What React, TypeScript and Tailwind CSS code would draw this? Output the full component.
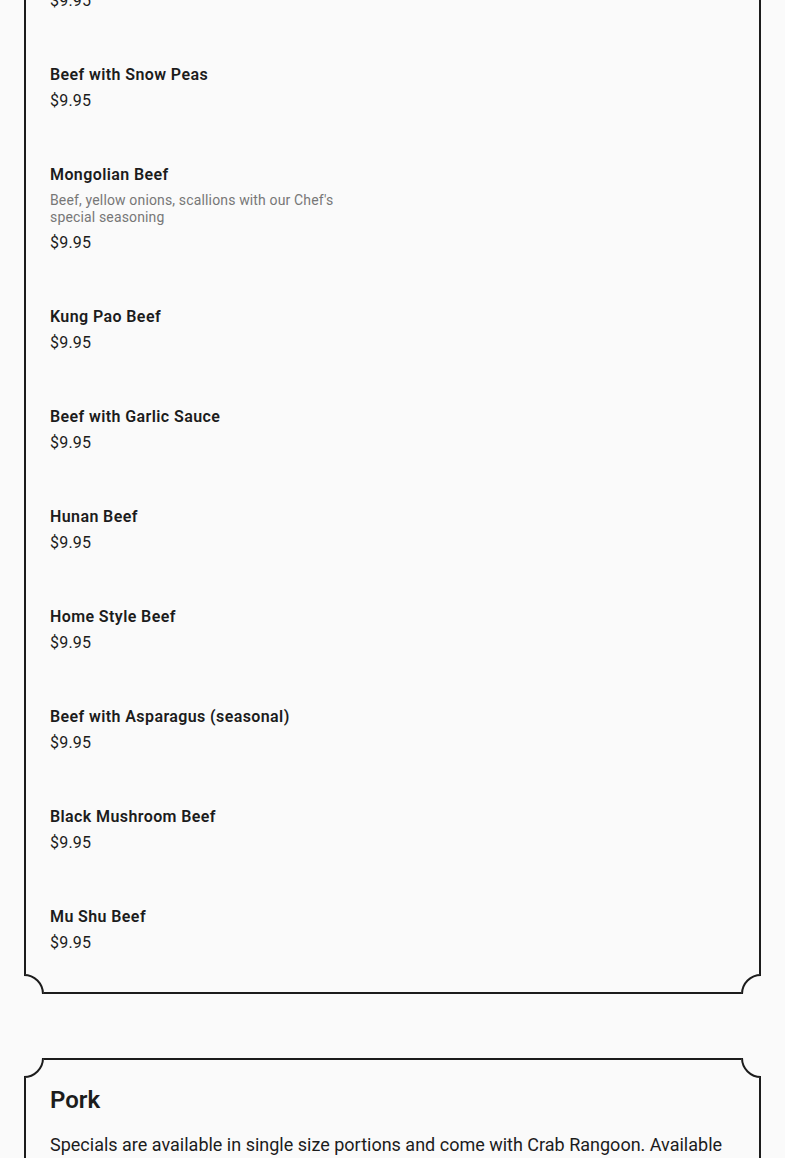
const beefItems = [
  { name: 'Beef with Snow Peas', price: '$9.95' },
  { name: 'Mongolian Beef', desc: "Beef, yellow onions, scallions with our Chef's special seasoning", price: '$9.95' },
  { name: 'Kung Pao Beef', price: '$9.95' },
  { name: 'Beef with Garlic Sauce', price: '$9.95' },
  { name: 'Hunan Beef', price: '$9.95' },
  { name: 'Home Style Beef', price: '$9.95' },
  { name: 'Beef with Asparagus (seasonal)', price: '$9.95' },
  { name: 'Black Mushroom Beef', price: '$9.95' },
  { name: 'Mu Shu Beef', price: '$9.95' },
]

// scooped corner: covers the card's border corner and draws a quarter arc
function Corner({ pos }: { pos: 'tl' | 'tr' | 'bl' | 'br' }) {
  const box = {
    tl: '-top-[2px] -left-[2px]',
    tr: '-top-[2px] -right-[2px]',
    bl: '-bottom-[2px] -left-[2px]',
    br: '-bottom-[2px] -right-[2px]',
  }[pos]
  const circle = {
    tl: '-top-[20px] -left-[20px]',
    tr: '-top-[20px] -right-[20px]',
    bl: '-bottom-[20px] -left-[20px]',
    br: '-bottom-[20px] -right-[20px]',
  }[pos]
  return (
    <div className={`absolute ${box} w-[20px] h-[20px] overflow-hidden bg-[#fafafa]`}>
      <div className={`absolute ${circle} w-[40px] h-[40px] rounded-full border-2 border-[#1c1c1c]`} />
    </div>
  )
}

function MenuItem({ name, desc, price }: { name: string; desc?: string; price: string }) {
  return (
    <div className="flex flex-col">
      <h4 className="text-base leading-6 font-semibold tracking-[0.4px] text-[#1c1c1c]">{name}</h4>
      {desc && (
        <p className="w-[300px] mt-[5px] text-sm leading-[17px] tracking-[0.15px] text-[#777777]">{desc}</p>
      )}
      <p className={`${desc ? 'mt-[5px]' : 'mt-[2px]'} text-base leading-6 tracking-[0.2px] text-[#1c1c1c]`}>{price}</p>
    </div>
  )
}

export default function App() {
  return (
    <div className="min-h-screen bg-[#fafafa] overflow-hidden" style={{ fontFamily: 'Roboto, "Liberation Sans", sans-serif' }}>
      <div className="mx-6 h-[1158px] overflow-hidden">
        <div className="relative border-x-2 border-b-2 border-[#1c1c1c] px-6 pb-[37px]">
          <div className="flex flex-col gap-[50px]">
            <p className="-mt-[11px] text-base leading-6 tracking-[0.2px] text-[#1c1c1c]">$9.95</p>
            {beefItems.map((item) => (
              <MenuItem key={item.name} {...item} />
            ))}
          </div>
          <Corner pos="bl" />
          <Corner pos="br" />
        </div>

        <div className="relative mt-[64px] border-2 border-[#1c1c1c] px-6 pt-[24px] pb-10">
          <h3 className="text-2xl leading-8 font-semibold text-[#1c1c1c]">Pork</h3>
          <p className="mt-[15px] text-lg leading-7 text-[#1c1c1c]">
            Specials are available in single size portions and come with Crab Rangoon. Available for lunch and dinner every day.
          </p>
          <Corner pos="tl" />
          <Corner pos="tr" />
        </div>
      </div>
    </div>
  )
}
